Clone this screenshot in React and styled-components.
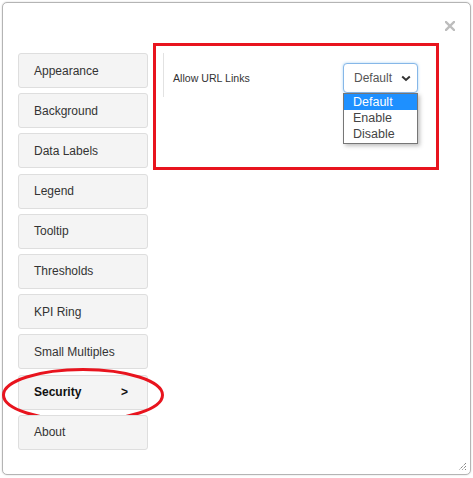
import React from "react";
import styled, { createGlobalStyle } from "styled-components";

const Global = createGlobalStyle`
  html, body { margin: 0; padding: 0; background: #fff; }
  body { font-family: "Liberation Sans", Arial, sans-serif; }
  * { box-sizing: border-box; }
`;

const Page = styled.div`
  padding: 2px;
  width: 473px;
  height: 478px;
`;

const Dialog = styled.div`
  position: relative;
  width: 469px;
  height: 473px;
  border: 1px solid #b4b4b4;
  border-radius: 5px;
  box-shadow: 0 0 2px rgba(0, 0, 0, 0.18);
  background: #fff;
  display: flex;
  flex-direction: column;
`;

const Header = styled.div`
  height: 40px;
  display: flex;
  justify-content: flex-end;
  align-items: flex-start;
  padding: 18px 15px 0 0;
`;

const CloseBtn = styled.div`
  width: 10px;
  height: 10px;
  display: flex;
  cursor: pointer;
`;

const Body = styled.div`
  display: flex;
  align-items: flex-start;
  padding-left: 15px;
  gap: 5px;
`;

const Sidebar = styled.div`
  width: 130px;
  margin-top: 10px;
  display: flex;
  flex-direction: column;
  gap: 5.2px;
`;

const NavButton = styled.div`
  position: relative;
  height: 35px;
  background: #f4f4f4;
  border: 1px solid #dedede;
  border-radius: 3px;
  display: flex;
  align-items: center;
  justify-content: space-between;
  padding: 0 19px 0 15px;
  font-size: 12px;
  color: ${(p) => (p.$active ? "#111" : "#333")};
  font-weight: ${(p) => (p.$active ? "bold" : "normal")};
`;

const Arrow = styled.span`
  font-weight: bold;
  font-size: 12px;
`;

const Ellipse = styled.svg`
  position: absolute;
  left: -17px;
  top: -8px;
  width: 162px;
  height: 54px;
  overflow: visible;
  pointer-events: none;
`;

const Panel = styled.div`
  width: 286px;
  height: 127px;
  border: 3px solid #e8141e;
  padding: 7px 0 0 7px;
`;

const SettingRow = styled.div`
  width: 255px;
  height: 44px;
  border-left: 1px solid #e2e2e2;
  padding: 6px 0 0 9px;
  display: flex;
  align-items: center;
  justify-content: space-between;
`;

const Label = styled.span`
  font-size: 10.6px;
  color: #333;
`;

const SelectWrap = styled.div`
  position: relative;
`;

const SelectBox = styled.div`
  width: 75px;
  height: 30px;
  border: 1px solid #86b7e8;
  border-radius: 4px;
  box-shadow: 0 0 3px rgba(102, 175, 233, 0.55);
  background: #fff;
  display: flex;
  align-items: center;
  justify-content: space-between;
  padding: 0 6px 0 10px;
  font-size: 12px;
  color: #555;
`;

const OptionList = styled.div`
  position: absolute;
  left: 0;
  top: 30px;
  width: 75px;
  border: 1px solid #767676;
  background: #fff;
  box-shadow: 2px 2px 4px rgba(0, 0, 0, 0.25);
  padding: 0 0 1px;
`;

const Option = styled.div`
  height: 16px;
  line-height: 16px;
  padding-left: 9px;
  font-size: 12.5px;
  color: ${(p) => (p.$selected ? "#fff" : "#444")};
  background: ${(p) => (p.$selected ? "#1e90ff" : "transparent")};
`;

const Grip = styled.svg`
  position: absolute;
  right: 3px;
  bottom: 3px;
  width: 9px;
  height: 9px;
`;

const items = [
  "Appearance",
  "Background",
  "Data Labels",
  "Legend",
  "Tooltip",
  "Thresholds",
  "KPI Ring",
  "Small Multiples",
  "Security",
  "About",
];

export default function App() {
  return (
    <Page>
      <Global />
      <Dialog>
        <Header>
          <CloseBtn>
            <svg width="10" height="10" viewBox="0 0 10 10">
              <path d="M1 1 L9 9 M9 1 L1 9" stroke="#bdbdbd" strokeWidth="2.4" strokeLinecap="square" />
            </svg>
          </CloseBtn>
        </Header>
        <Body>
          <Sidebar>
            {items.map((it) => {
              const active = it === "Security";
              return (
                <NavButton key={it} $active={active}>
                  <span>{it}</span>
                  {active && <Arrow>&gt;</Arrow>}
                  {active && (
                    <Ellipse viewBox="0 0 162 54">
                      <ellipse cx="81" cy="27" rx="79.5" ry="25.5" fill="none" stroke="#e8141e" strokeWidth="3" />
                    </Ellipse>
                  )}
                </NavButton>
              );
            })}
          </Sidebar>
          <Panel>
            <SettingRow>
              <Label>Allow URL Links</Label>
              <SelectWrap>
                <SelectBox>
                  <span>Default</span>
                  <svg width="10" height="7" viewBox="0 0 10 7">
                    <path d="M1.2 1.5 L5 5 L8.8 1.5" fill="none" stroke="#333" strokeWidth="2" />
                  </svg>
                </SelectBox>
                <OptionList>
                  <Option $selected>Default</Option>
                  <Option>Enable</Option>
                  <Option>Disable</Option>
                </OptionList>
              </SelectWrap>
            </SettingRow>
          </Panel>
        </Body>
        <Grip viewBox="0 0 9 9">
          <path d="M8 1 L1 8 M8 4 L4 8 M8 7 L7 8" stroke="#555" strokeWidth="1" strokeDasharray="1 1" />
        </Grip>
      </Dialog>
    </Page>
  );
}
